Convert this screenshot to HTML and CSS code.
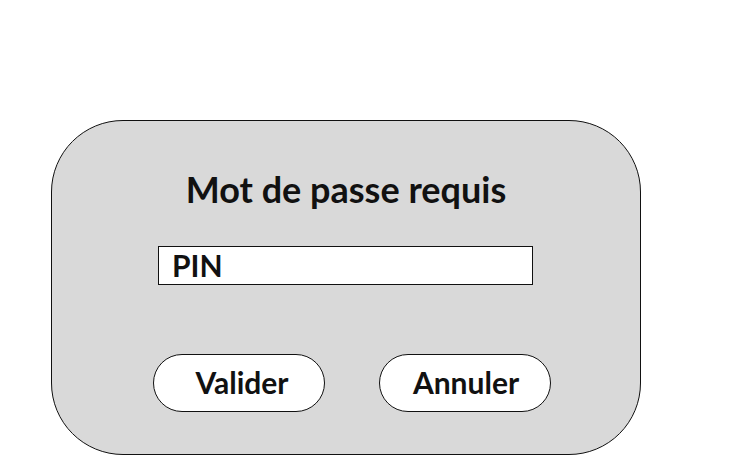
FILE: index.html
```html
<!DOCTYPE html>
<html lang="fr">
<head>
<meta charset="utf-8">
<title>Mot de passe requis</title>
<link rel="stylesheet" href="styles.css">
</head>
<body>
<div class="panel">
  <h1 class="title">Mot de passe requis</h1>
  <div class="field">PIN</div>
  <div class="actions">
    <button class="btn btn-ok">Valider</button>
    <button class="btn btn-cancel">Annuler</button>
  </div>
</div>
</body>
</html>
```

FILE: styles.css
```css
html, body {
  margin: 0;
  padding: 0;
  background: #ffffff;
}
body {
  font-family: Lato, "Liberation Sans", sans-serif;
  color: #111111;
  width: 736px;
  height: 456px;
  overflow: hidden;
}
.panel {
  box-sizing: border-box;
  margin: 120px 0 0 51px;
  width: 590px;
  height: 335px;
  background: #d9d9d9;
  border: 1px solid #111111;
  border-radius: 72px;
  display: flex;
  flex-direction: column;
  align-items: center;
  padding-top: 47px;
}
.title {
  margin: 0;
  font-size: 36px;
  font-weight: 700;
  line-height: 43px;
}
.field {
  box-sizing: border-box;
  margin-top: 35px;
  margin-right: 1px;
  width: 375px;
  height: 39px;
  background: #ffffff;
  border: 1px solid #111111;
  padding-left: 13px;
  font-size: 30px;
  font-weight: 700;
  line-height: 37px;
}
.actions {
  margin-top: 69px;
  margin-left: 12px;
  display: flex;
  gap: 54px;
}
.btn {
  box-sizing: border-box;
  width: 172px;
  height: 58px;
  background: #ffffff;
  border: 1px solid #111111;
  border-radius: 29px;
  font-family: Lato, "Liberation Sans", sans-serif;
  font-size: 30px;
  font-weight: 700;
  color: #111111;
  padding: 0 0 2px 6px;
}
.btn-cancel {
  padding-left: 2px;
}
```
